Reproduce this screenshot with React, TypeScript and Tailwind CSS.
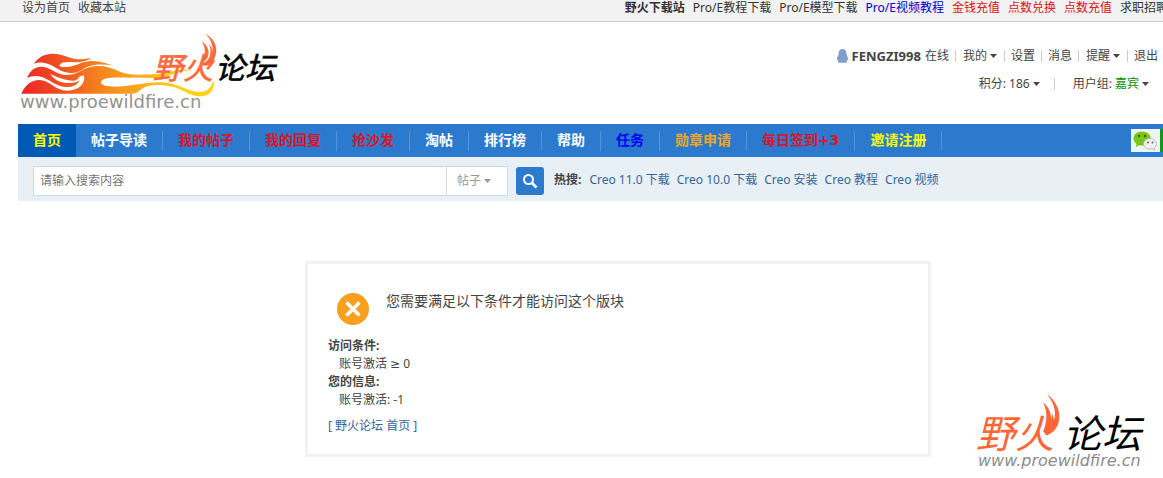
const topLinks = [
  { label: '野火下载站', className: 'font-bold text-[#333]' },
  { label: 'Pro/E教程下载', className: 'text-[#333]' },
  { label: 'Pro/E模型下载', className: 'text-[#333]' },
  { label: 'Pro/E视频教程', className: 'text-[#0000cc]' },
  { label: '金钱充值', className: 'text-[#dd1111]' },
  { label: '点数兑换', className: 'text-[#dd1111]' },
  { label: '点数充值', className: 'text-[#dd1111]' },
  { label: '求职招聘', className: 'text-[#333]' },
];

const navItems = [
  { label: '帖子导读', className: 'text-white' },
  { label: '我的帖子', className: 'text-[#dc1428]' },
  { label: '我的回复', className: 'text-[#dc1428]' },
  { label: '抢沙发', className: 'text-[#dc1428]' },
  { label: '淘帖', className: 'text-white' },
  { label: '排行榜', className: 'text-white' },
  { label: '帮助', className: 'text-white' },
  { label: '任务', className: 'text-[#0000ff]' },
  { label: '勋章申请', className: 'text-[#f5a623]' },
  { label: '每日签到+3', className: 'text-[#dc1428]' },
  { label: '邀请注册', className: 'text-[#ffff00]' },
];

const hotWords = ['Creo 11.0 下载', 'Creo 10.0 下载', 'Creo 安装', 'Creo 教程', 'Creo 视频'];

const Caret = () => (
  <svg width="7" height="4" viewBox="0 0 7 4" fill="currentColor" className="shrink-0">
    <path d="M0 0h7L3.5 4z" />
  </svg>
);

const Divider = () => <span className="h-3 w-px bg-[#ccc]" />;

const Logo = () => (
  <svg width="262" height="82" viewBox="18 30 262 82" role="img" aria-label="野火论坛">
    <defs>
      <linearGradient id="fire" gradientUnits="userSpaceOnUse" x1="20" y1="170" x2="480" y2="120">
        <stop offset="0" stopColor="#ee2424" />
        <stop offset="0.25" stopColor="#f04e23" />
        <stop offset="0.5" stopColor="#f5821f" />
        <stop offset="0.8" stopColor="#fbb01f" />
        <stop offset="1" stopColor="#ffd21a" />
      </linearGradient>
    </defs>
    <g transform="translate(15 30) scale(0.33333)">
      <path
        fill="url(#fire)"
        d="M57 101C72 78 92 71 117 71C142 72 158 82 178 86C196 89 212 87 230 84C218 92 200 98 180 97C158 95 139 95 134 104C132 111 143 112 158 111C183 109 196 94 232 93C255 94 275 100 292 105C270 104 247 101 222 109C204 115 194 130 168 129C132 128 116 101 84 98C74 97 65 99 57 101Z"
      />
      <path
        fill="url(#fire)"
        d="M36 143C45 123 58 111 78 110C108 110 121 133 153 135C181 136 199 119 218 113C249 103 282 109 312 124C344 139 385 134 425 132C450 131 470 121 497 119C514 118 522 119 530 121C501 123 480 131 455 138C416 149 382 141 345 143C307 142 260 139 258 157C260 171 294 171 323 169C357 166 399 156 440 157C493 159 515 185 553 186C579 186 590 170 594 151C600 170 592 196 562 199C522 202 505 176 465 169C426 162 397 165 377 179C368 187 360 191 350 191H19C30 166 48 151 73 150C106 151 121 183 158 182C191 181 212 160 207 137C199 136 193 140 189 146C182 153 172 153 160 151C137 147 121 138 106 132C114 146 133 158 155 159C175 160 185 157 194 151C188 165 172 173 152 171C114 167 96 138 63 138C51 138 43 141 36 143Z"
      />
      <path
        fill="#ff6a3c"
        d="M569 10C602 29 612 58 598 86C593 97 583 107 570 107C562 107 558 103 560 98C579 99 589 79 586 55C585 50 583 45 581 41C589 49 592 57 592 66C596 47 587 26 569 10ZM561 34C579 47 586 67 577 84C573 92 565 96 557 96C569 83 576 62 561 34Z"
      />
    </g>
    <g fontFamily="'Noto Sans CJK SC', sans-serif" fontStyle="italic" strokeWidth="0.6">
      <text x="153" y="79" fontSize="30" fill="#ff6a3c" stroke="#ff6a3c">野火</text>
      <text x="215" y="79" fontSize="30" fill="#000" stroke="#000">论坛</text>
    </g>
    <text x="20" y="108" fontSize="18" fill="#929292" fontFamily="'DejaVu Sans', sans-serif">
      www.proewildfire.cn
    </text>
  </svg>
);

const Watermark = () => (
  <svg
    className="pointer-events-none absolute right-[17px] bottom-1"
    width="172"
    height="80"
    viewBox="974 394 172 80"
    role="img"
    aria-label="www.proewildfire.cn"
  >
    <path
      fill="#ff6535"
      d="M1047 394C1056 401 1061 411 1059 421C1057 429 1052 434 1046 435L1043 431C1049 428 1052 421 1052 413L1054 420C1057 411 1053 402 1047 394ZM1043 402C1050 408 1053 417 1050 425C1048 429 1046 431 1043 432C1047 423 1048 412 1043 402Z"
    />
    <g fontFamily="'Noto Sans CJK SC', sans-serif" fontStyle="italic">
      <text x="976" y="448" fontSize="39" fill="#ff6535">野火</text>
      <text x="1063" y="448" fontSize="39" fill="#000">论坛</text>
    </g>
    <text
      x="978"
      y="466"
      fontSize="16"
      fontStyle="italic"
      fill="#8c8c8c"
      fontFamily="'DejaVu Sans', sans-serif"
    >
      www.proewildfire.cn
    </text>
  </svg>
);

const WechatIcon = () => (
  <svg width="27" height="21" viewBox="0 0 27 21">
    <path
      fill="#7bc41c"
      d="M10 1.500C5 1.500 1.500 4.500 1.500 8.500c0 2.300 1.200 4.200 3 5.400L3.800 17l3.400-1.800c.9.200 1.800.3 2.800.3 5 0 8.800-3 8.800-7s-3.800-7-8.800-7z"
    />
    <circle cx="7" cy="6" r="1.200" fill="#35610a" />
    <circle cx="13" cy="6" r="1.200" fill="#35610a" />
    <path
      fill="#f0f0f0"
      stroke="#aaa"
      strokeWidth="0.700"
      d="M18 8.500c-3.700 0-6.500 2.300-6.500 5.300s2.800 5.300 6.500 5.300c.8 0 1.600-.1 2.300-.3l2.600 1.400-.6-2.400c1.400-1 2.200-2.400 2.200-4 0-3-2.800-5.300-6.500-5.300z"
    />
    <circle cx="16" cy="12.500" r="1" fill="#666" />
    <circle cx="20.500" cy="12.500" r="1" fill="#666" />
  </svg>
);

const TopBar = () => (
  <div className="flex h-[22px] justify-between overflow-hidden border-b border-[#cdcdcd] bg-[#f2f2f2] pl-[22px] leading-4 whitespace-nowrap">
    <div className="flex gap-2">
      <a href="#">设为首页</a>
      <a href="#">收藏本站</a>
    </div>
    <div className="-mr-[5px] flex gap-2">
      {topLinks.map((link) => (
        <a key={link.label} href="#" className={link.className}>
          {link.label}
        </a>
      ))}
    </div>
  </div>
);

const UserPanel = () => (
  <div className="flex flex-col items-end gap-[10px] pt-[25px] pr-[5px] leading-[18px] whitespace-nowrap">
    <div className="flex items-center gap-[6px]">
      <span className="flex items-center gap-1">
        <svg width="11" height="14" viewBox="0 0 11 14" fill="#7f9fcc">
          <path d="M5.500 0C3 0 1.600 1.800 1.600 4v1.500C.6 7 0 8.800 0 10.200c0 .8.300 1.200.9 1L1 12.500c0 .9.600 1.200 1.700 1.200h5.600c1.100 0 1.700-.3 1.700-1.200l.1-1.300c.6.200.9-.2.900-1 0-1.400-.6-3.200-1.600-4.700V4C9.400 1.800 8 0 5.500 0z" />
        </svg>
        <a href="#" className="text-[13px] font-bold">FENGZI998</a>
        <span>在线</span>
      </span>
      <Divider />
      <button className="flex items-center gap-[3px] px-px">我的<Caret /></button>
      <Divider />
      <a href="#">设置</a>
      <Divider />
      <a href="#">消息</a>
      <Divider />
      <button className="flex items-center gap-[3px] px-px">提醒<Caret /></button>
      <Divider />
      <a href="#">退出</a>
    </div>
    <div className="flex items-center gap-[14px] pr-[9px]">
      <button className="flex items-center gap-[3px]">积分: 186<Caret /></button>
      <Divider />
      <button className="flex items-center gap-[3px] pl-1">
        <span>
          用户组: <span className="text-[#0a9000]">嘉宾</span>
        </span>
        <Caret />
      </button>
    </div>
  </div>
);

const NavBar = () => (
  <nav className="flex h-[33px] items-center justify-between bg-[#2b7acd] font-['DejaVu_Sans','Noto_Sans_CJK_SC',sans-serif] text-[14px] font-bold whitespace-nowrap">
    <div className="flex h-full items-center">
      <a href="#" className="flex h-full items-center bg-[#005ab4] px-[15px] text-[#ffff00]">
        首页
      </a>
      {navItems.map((item) => (
        <span key={item.label} className="flex h-5 items-center border-r border-[#5594dc] px-[15px]">
          <a href="#" className={item.className}>
            {item.label}
          </a>
        </span>
      ))}
    </div>
    <a
      href="#"
      aria-label="微信"
      className="flex h-[23px] shrink-0 items-center border-r-[3px] border-[#109618] bg-[#eef6f4] px-px"
    >
      <WechatIcon />
    </a>
  </nav>
);

const SearchBar = () => (
  <form className="flex items-center bg-[#e8eff5] pt-[9px] pb-[5px] pl-[15px] whitespace-nowrap">
    <div className="flex h-[30px] border border-[#cddbe2] bg-white">
      <input
        type="text"
        aria-label="搜索"
        placeholder="请输入搜索内容"
        className="w-[413px] border-r border-[#cddbe2] px-[6px] text-[12px] outline-none placeholder:text-[#757575]"
      />
      <label className="relative flex items-center text-[#999]">
        <select aria-label="搜索类型" className="w-[60px] appearance-none pl-[10px] outline-none">
          <option>帖子</option>
        </select>
        <span className="pointer-events-none absolute right-4">
          <Caret />
        </span>
      </label>
    </div>
    <button
      type="submit"
      aria-label="搜索"
      className="mr-[10px] ml-2 flex size-7 items-center justify-center rounded-[3px] bg-[#2b7acd] text-white"
    >
      <svg width="16" height="16" viewBox="0 0 16 16" fill="none" stroke="currentColor">
        <circle cx="6.500" cy="6.500" r="4.500" strokeWidth="2" />
        <path d="M10 10l4.500 4.500" strokeWidth="2.600" />
      </svg>
    </button>
    <div className="flex gap-2 pb-[2px]">
      <strong>热搜:</strong>
      <div className="flex gap-[7px]">
        {hotWords.map((word) => (
          <a key={word} href="#" className="text-[#336699]">
            {word}
          </a>
        ))}
      </div>
    </div>
  </form>
);

const AccessNotice = () => (
  <section className="mx-auto max-w-[626px] border-[3px] border-[#f2f2f2] px-5 pt-[29px] pb-[19px] leading-[18px]">
    <div className="flex items-start gap-[17px] pb-3 pl-[9px]">
      <svg width="32" height="32" viewBox="0 0 32 32">
        <circle cx="16" cy="16" r="16" fill="#f8a01d" />
        <path d="M9.500 9.500l13 13M22.500 9.500l-13 13" stroke="#fff" strokeWidth="3.500" />
      </svg>
      <h1 className="text-[14px] leading-4">您需要满足以下条件才能访问这个版块</h1>
    </div>
    <dl>
      <dt className="font-bold">访问条件:</dt>
      <dd className="pl-[11px]">账号激活 ≥ 0</dd>
      <dt className="font-bold">您的信息:</dt>
      <dd className="pl-[11px]">账号激活: -1</dd>
    </dl>
    <a href="#" className="mt-2 block text-[#336699]">
      [ 野火论坛 首页 ]
    </a>
  </section>
);

const App = () => {
  return (
    <div className="relative min-h-screen overflow-hidden bg-white font-['Noto_Sans','DejaVu_Sans','Noto_Sans_CJK_SC',sans-serif] text-[12px] text-[#444]">
      <TopBar />
      <div className="pl-[18px]">
        <header className="flex h-[102px] justify-between">
          <div className="pt-2">
            <Logo />
          </div>
          <UserPanel />
        </header>
        <NavBar />
        <SearchBar />
      </div>
      <main className="pt-[60px] pb-5 pl-[73px]">
        <AccessNotice />
      </main>
      <Watermark />
    </div>
  );
};

export default App;
